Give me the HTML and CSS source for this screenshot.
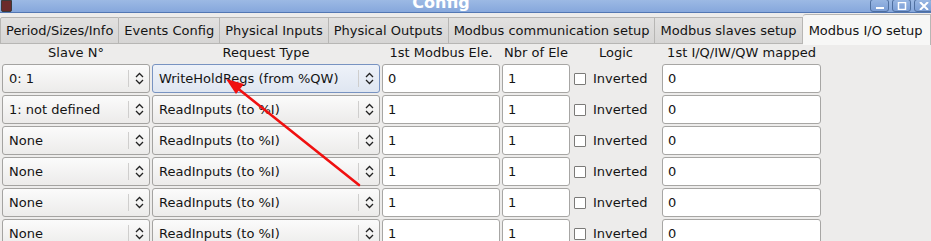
FILE: index.html
```html
<!DOCTYPE html>
<html lang="en">
<head>
    <meta charset="UTF-8">
    <title>Config</title>
    <link rel="stylesheet" href="styles.css">
</head>
<body>
    <div class="window">
        <div class="titlebar">
            <div class="app-icon"></div>
            <div class="title">Config</div>
            <div class="win-buttons">
                <div class="win-btn">
                    <svg width="10" height="8" viewBox="0 0 10 8"><rect x="1" y="5" width="8" height="2" fill="#fff"/></svg>
                </div>
                <div class="win-btn">
                    <svg width="10" height="8" viewBox="0 0 10 8"><rect x="1.5" y="0.5" width="7" height="7" fill="none" stroke="#fff" stroke-width="1.5"/></svg>
                </div>
                <div class="win-btn">
                    <svg width="10" height="8" viewBox="0 0 10 8"><path d="M1 0 L9 8 M9 0 L1 8" stroke="#fff" stroke-width="2"/></svg>
                </div>
            </div>
        </div>

        <!-- Tabs -->
        <div class="tabs">
            <div class="tab">Period/Sizes/Info</div>
            <div class="tab">Events Config</div>
            <div class="tab">Physical Inputs</div>
            <div class="tab">Physical Outputs</div>
            <div class="tab">Modbus communication setup</div>
            <div class="tab">Modbus slaves setup</div>
            <div class="tab active">Modbus I/O setup</div>
        </div>

        <!-- Modbus I/O table -->
        <div class="grid">
            <div class="head">Slave N°</div>
            <div class="head">Request Type</div>
            <div class="head">1st Modbus Ele.</div>
            <div class="head">Nbr of Ele</div>
            <div class="head">Logic</div>
            <div class="head">1st I/Q/IW/QW mapped</div>

            <div class="combo"><span class="val">0: 1</span><span class="arrows"></span></div>
            <div class="combo focus"><span class="val">WriteHoldRegs (from %QW)</span><span class="arrows"></span></div>
            <div class="field">0</div>
            <div class="field">1</div>
            <label class="logic"><span class="check"></span>Inverted</label>
            <div class="field">0</div>

            <div class="combo"><span class="val">1: not defined</span><span class="arrows"></span></div>
            <div class="combo"><span class="val">ReadInputs (to %I)</span><span class="arrows"></span></div>
            <div class="field">1</div>
            <div class="field">1</div>
            <label class="logic"><span class="check"></span>Inverted</label>
            <div class="field">0</div>

            <div class="combo"><span class="val">None</span><span class="arrows"></span></div>
            <div class="combo"><span class="val">ReadInputs (to %I)</span><span class="arrows"></span></div>
            <div class="field">1</div>
            <div class="field">1</div>
            <label class="logic"><span class="check"></span>Inverted</label>
            <div class="field">0</div>

            <div class="combo"><span class="val">None</span><span class="arrows"></span></div>
            <div class="combo"><span class="val">ReadInputs (to %I)</span><span class="arrows"></span></div>
            <div class="field">1</div>
            <div class="field">1</div>
            <label class="logic"><span class="check"></span>Inverted</label>
            <div class="field">0</div>

            <div class="combo"><span class="val">None</span><span class="arrows"></span></div>
            <div class="combo"><span class="val">ReadInputs (to %I)</span><span class="arrows"></span></div>
            <div class="field">1</div>
            <div class="field">1</div>
            <label class="logic"><span class="check"></span>Inverted</label>
            <div class="field">0</div>

            <div class="combo"><span class="val">None</span><span class="arrows"></span></div>
            <div class="combo"><span class="val">ReadInputs (to %I)</span><span class="arrows"></span></div>
            <div class="field">1</div>
            <div class="field">1</div>
            <label class="logic"><span class="check"></span>Inverted</label>
            <div class="field">0</div>
        </div>

        <!-- annotation arrow -->
        <svg class="annot" width="931" height="241" viewBox="0 0 931 241">
            <line x1="359" y1="185" x2="236" y2="87" stroke="#f01010" stroke-width="2.6" stroke-linecap="round"/>
            <polygon points="226,79 244,84 236,94" fill="#f01010"/>
        </svg>
    </div>
</body>
</html>
```

FILE: styles.css
```css
body {
    margin: 0;
    padding: 0;
    background: #edeceb;
    font-family: "DejaVu Sans", sans-serif;
    font-size: 13px;
    color: #141414;
}
.window {
    position: relative;
    width: 931px;
    height: 241px;
    overflow: hidden;
}
.titlebar {
    height: 12px;
    background: linear-gradient(#9cb9e4, #86a7dc);
    border-bottom: 1px solid #5377b3;
    display: flex;
    align-items: flex-end;
    overflow: hidden;
}
.app-icon {
    width: 9px;
    height: 10px;
    margin: 0 0 2px 1px;
    background: #6b2a2a;
    border: 1px solid #3a3a3a;
    align-self: flex-start;
    border-radius: 0 0 2px 2px;
}
.title {
    flex: 1;
    text-align: center;
    color: #fff;
    font-weight: bold;
    font-size: 16px;
    line-height: 16px;
    margin-bottom: 1px;
}
.win-buttons {
    display: flex;
    gap: 3px;
    align-self: flex-start;
    margin-right: -2px;
}
.win-btn {
    width: 17px;
    height: 11px;
    margin-top: -1px;
    border: 1px solid #4f6f9f;
    border-radius: 3px;
    background: linear-gradient(#98b6e2, #7b9ed6);
    display: flex;
    align-items: center;
    justify-content: center;
}
.tabs {
    display: flex;
    margin-top: 3px;
    height: 27px;
    border-bottom: 1px solid #b4b4b2;
}
.tab {
    padding: 0 5px;
    height: 25px;
    line-height: 26px;
    margin-top: 1px;
    border: 1px solid #b7b6b4;
    border-left: none;
    background: linear-gradient(#e2e1e0, #d6d5d4);
    white-space: nowrap;
}
.tab:first-child {
    border-left: 1px solid #b7b6b4;
    border-top-left-radius: 2px;
}
.tab.active {
    flex: 1;
    margin-top: -2px;
    height: 30px;
    line-height: 31px;
    border-bottom: none;
    background: #f7f7f6;
    border-top-left-radius: 3px;
    padding-left: 6px;
}
.grid {
    display: grid;
    grid-template-columns: 148px 228px 118px 68px 88px 159px;
    grid-template-rows: 18px;
    grid-auto-rows: 29px;
    column-gap: 2px;
    row-gap: 2px;
    padding: 0 0 0 2px;
}
.grid .head {
    line-height: 18px;
    text-align: center;
}
.combo {
    display: flex;
    align-items: center;
    border: 1px solid #a4a3a1;
    border-radius: 3px;
    background: linear-gradient(#fbfbfb, #ecebea);
}
.combo.focus {
    border-color: #7893c1;
    background: linear-gradient(#eef2f9, #dfe6f1);
}
.combo .val {
    flex: 1;
    padding-left: 6px;
    white-space: nowrap;
}
.combo .arrows {
    width: 20px;
    height: 17px;
    border-left: 1px solid #cfcecd;
    background: url("data:image/svg+xml,%3Csvg xmlns='http://www.w3.org/2000/svg' width='9' height='13'%3E%3Cpath d='M1 5 L4.5 1.5 L8 5 M1 8 L4.5 11.5 L8 8' fill='none' stroke='%23222' stroke-width='1.3'/%3E%3C/svg%3E") no-repeat center;
}
.field {
    border: 1px solid #a7a6a4;
    border-radius: 3px;
    background: #fff;
    padding-left: 5px;
    line-height: 27px;
}
.logic {
    display: flex;
    align-items: center;
    gap: 7px;
    padding-left: 2px;
}
.check {
    width: 10px;
    height: 10px;
    border: 1px solid #7b7a78;
    border-radius: 1px;
    background: #fff;
}
.annot {
    position: absolute;
    left: 0;
    top: 0;
    pointer-events: none;
}
```
